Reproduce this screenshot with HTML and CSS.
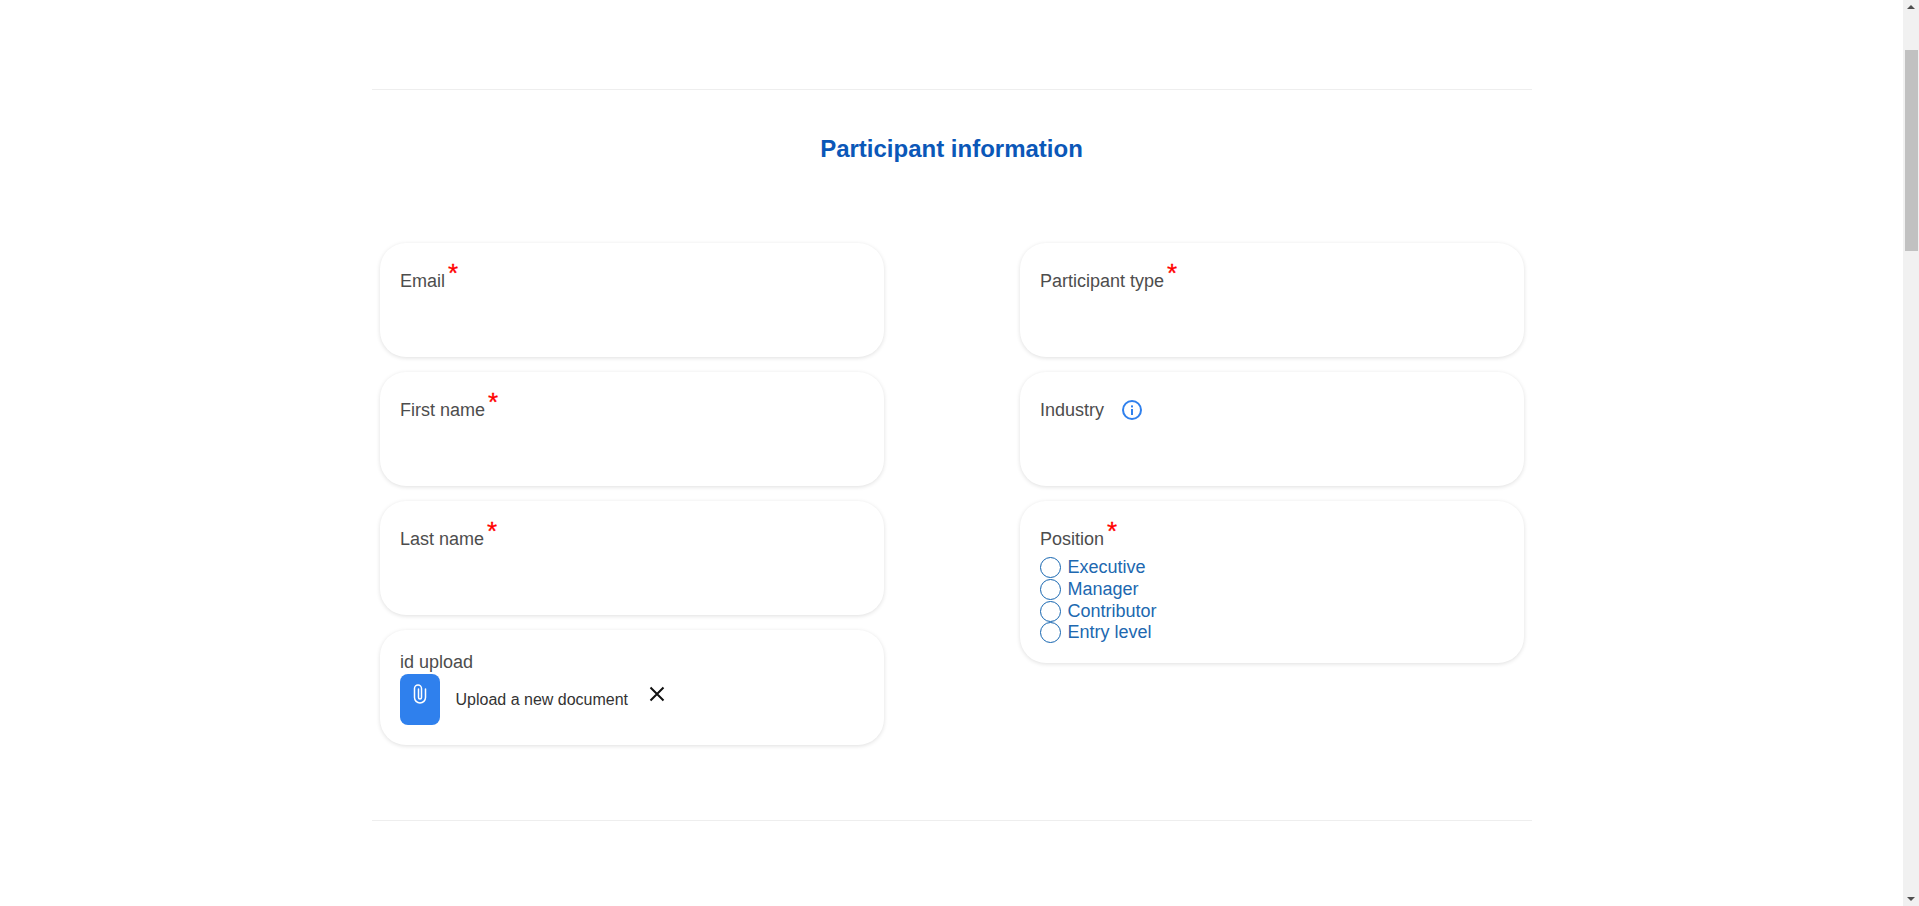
FILE: index.html
```html
<!DOCTYPE html>
<html lang="en">
<head>
<meta charset="utf-8">
<title>Participant information</title>
<link rel="stylesheet" href="styles.css">
</head>
<body>
<main class="page">
  <section class="section">
    <h2 class="title">Participant information</h2>
    <div class="grid">
      <div class="column">
        <div class="card"><div class="label">Email<span class="req">*</span></div></div>
        <div class="card"><div class="label">First name<span class="req">*</span></div></div>
        <div class="card"><div class="label">Last name<span class="req">*</span></div></div>
        <div class="card card-upload">
          <div class="label">id upload</div>
          <div class="upload">
            <button class="clip" type="button" aria-label="Attach">
              <svg width="14" height="20" viewBox="0 0 14 20" fill="none" stroke="#fff" stroke-width="1.5" stroke-linecap="round"><path d="M12.5 5v8.5a5.5 5.5 0 0 1-11 0V4.5a3.5 3.5 0 0 1 7 0v9a1.5 1.5 0 0 1-3 0V5"/></svg>
            </button>
            <span class="upload-text">Upload a new document</span>
            <svg class="close" width="16" height="16" viewBox="0 0 16 16" stroke="#111" stroke-width="2" fill="none"><path d="M1.5 1.5l13 13M14.5 1.5l-13 13"/></svg>
          </div>
        </div>
      </div>
      <div class="column">
        <div class="card"><div class="label">Participant type<span class="req">*</span></div></div>
        <div class="card"><div class="label">Industry
          <svg class="info" width="22" height="22" viewBox="0 0 22 22" fill="none"><circle cx="11" cy="11" r="9" stroke="#2f80ed" stroke-width="2"/><rect x="10" y="10" width="2" height="6" fill="#2f80ed"/><rect x="10" y="6.4" width="2" height="2" fill="#2f80ed"/></svg>
        </div></div>
        <div class="card card-position">
          <div class="label">Position<span class="req">*</span></div>
          <div class="options">
            <label class="option"><span class="radio"></span>Executive</label>
            <label class="option"><span class="radio"></span>Manager</label>
            <label class="option"><span class="radio"></span>Contributor</label>
            <label class="option"><span class="radio"></span>Entry level</label>
          </div>
        </div>
      </div>
    </div>
  </section>
</main>
<div class="scrollbar">
  <div class="arrow arrow-up"></div>
  <div class="thumb"></div>
  <div class="arrow arrow-down"></div>
</div>
</body>
</html>
```
FILE: styles.css
```css
* { box-sizing: border-box; }
html, body { margin: 0; height: 100%; overflow: hidden; background: #fff; }
body { font-family: "Liberation Sans", Arial, sans-serif; }
.page { width: 1903px; padding-top: 89px; display: flex; justify-content: center; }
.section {
  width: 1160px;
  height: 732px;
  border-top: 1px solid #eee;
  border-bottom: 1px solid #eee;
  padding: 0 8px;
}
.title {
  margin: 47px 0 0;
  height: 106px;
  text-align: center;
  color: #0b57b8;
  font: bold 24px/24px "Liberation Sans", sans-serif;
}
.grid { display: flex; justify-content: space-between; align-items: flex-start; }
.column { width: 504px; display: flex; flex-direction: column; gap: 15px; }
.card {
  height: 114px;
  padding: 26px 20px 0;
  border-radius: 26px;
  background: #fff;
  box-shadow: 0 1px 4px rgba(0,0,0,.13);
}
.card-upload { padding-top: 20px; height: 115px; }
.card-position { height: auto; padding-bottom: 19px; }
.label { font-size: 18px; line-height: 24px; color: #4d4d4d; display: flex; align-items: center; padding-left: .5px; }
.req { color: #f00; font-size: 26px; line-height: 24px; margin-left: 3px; align-self: flex-start; margin-top: -8px; -webkit-text-stroke: .3px #f00; }
.info { margin-left: 17px; }
.upload { display: flex; align-items: flex-start; }
.clip {
  width: 40px; height: 51px; padding: 10px 0 0;
  border: 0; border-radius: 8px; background: #2f80ed;
  display: flex; justify-content: center; align-items: flex-start;
}
.upload-text { margin: 16px 0 0 16px; font-size: 16px; line-height: 20px; color: #333; }
.close { margin: 12px 0 0 21px; }
.options { display: flex; flex-direction: column; margin-top: 6px; }
.option { display: flex; align-items: center; height: 21.7px; font-size: 18px; color: #2068b0; }
.radio { width: 21px; height: 21px; border: 1px solid #1565b0; border-radius: 50%; margin-right: 7px; }
.scrollbar { position: fixed; top: 0; right: 0; width: 16px; height: 906px; background: #f1f1f1; }
.arrow { position: absolute; left: 4px; width: 0; height: 0; border-left: 4px solid transparent; border-right: 4px solid transparent; }
.arrow-up { top: 5px; border-bottom: 4px solid #505050; }
.arrow-down { bottom: 5px; border-top: 4px solid #505050; }
.thumb { position: absolute; top: 50px; left: 2px; width: 13px; height: 201px; background: #c1c1c1; }
```
